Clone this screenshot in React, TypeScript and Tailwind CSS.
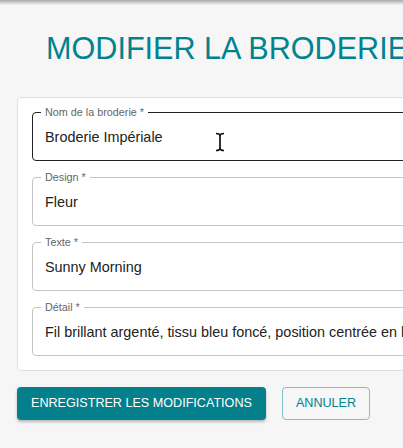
import React from "react";

const fields = [
  { label: "Nom de la broderie *", value: "Broderie Impériale", active: true },
  { label: "Design *", value: "Fleur" },
  { label: "Texte *", value: "Sunny Morning" },
  { label: "Détail *", value: "Fil brillant argenté, tissu bleu foncé, position centrée en haut du dos" },
];

function Field({ label, value, active }: { label: string; value: string; active?: boolean }) {
  return (
    <div
      className={`relative flex h-[49px] items-center rounded-[4px] border pl-[12px] pt-[3px] ${
        active ? "border-[#222]" : "border-[#c4c4c4]"
      }`}
    >
      <span className="absolute left-[8px] top-[-7px] bg-white px-1 text-[10.8px] leading-[13px] text-[#666]">
        {label}
      </span>
      <span className="whitespace-nowrap text-[14.4px] leading-[17px] text-[#222]">{value}</span>
    </div>
  );
}

export default function App() {
  return (
    <div
      className="relative h-[448px] w-[403px] overflow-hidden bg-[#f6f6f6]"
      style={{ fontFamily: '"Liberation Sans", Arial, sans-serif' }}
    >
      <div className="h-[5px] bg-gradient-to-b from-[#a8a8a8] to-[#f6f6f6]" />

      <h1 className="ml-[46px] mt-[28px] whitespace-nowrap text-[30.6px] font-normal leading-none text-[#00838f]">
        MODIFIER LA BRODERIE
      </h1>

      <div className="ml-[17px] mt-[33px] w-[640px] rounded-[4px] border border-[#e0e0e0] bg-white p-[14px]">
        <div className="flex flex-col gap-[16px]">
          {fields.map((f) => (
            <Field key={f.label} {...f} />
          ))}
        </div>
      </div>

      <div className="ml-[17px] mt-[16px] flex gap-[16px]">
        <button className="h-[33px] rounded-[4px] bg-[#03808b] px-[14px] text-[12.6px] text-white shadow-[0_2px_3px_rgba(0,0,0,0.25)]">
          ENREGISTRER LES MODIFICATIONS
        </button>
        <button className="h-[33px] rounded-[4px] border border-[#7fbfc5] bg-transparent px-[13px] text-[12.6px] text-[#00838f]">
          ANNULER
        </button>
      </div>

      <svg className="absolute left-[214px] top-[132px]" width="12" height="20" viewBox="0 0 12 20">
        <path
          d="M2 1.5 C4.5 1.5 6 2.2 6 4 L6 16 C6 17.8 4.5 18.5 2 18.5 M10 1.5 C7.5 1.5 6 2.2 6 4 M6 16 C6 17.8 7.5 18.5 10 18.5"
          fill="none"
          stroke="#111"
          strokeWidth="1.7"
        />
      </svg>
    </div>
  );
}
